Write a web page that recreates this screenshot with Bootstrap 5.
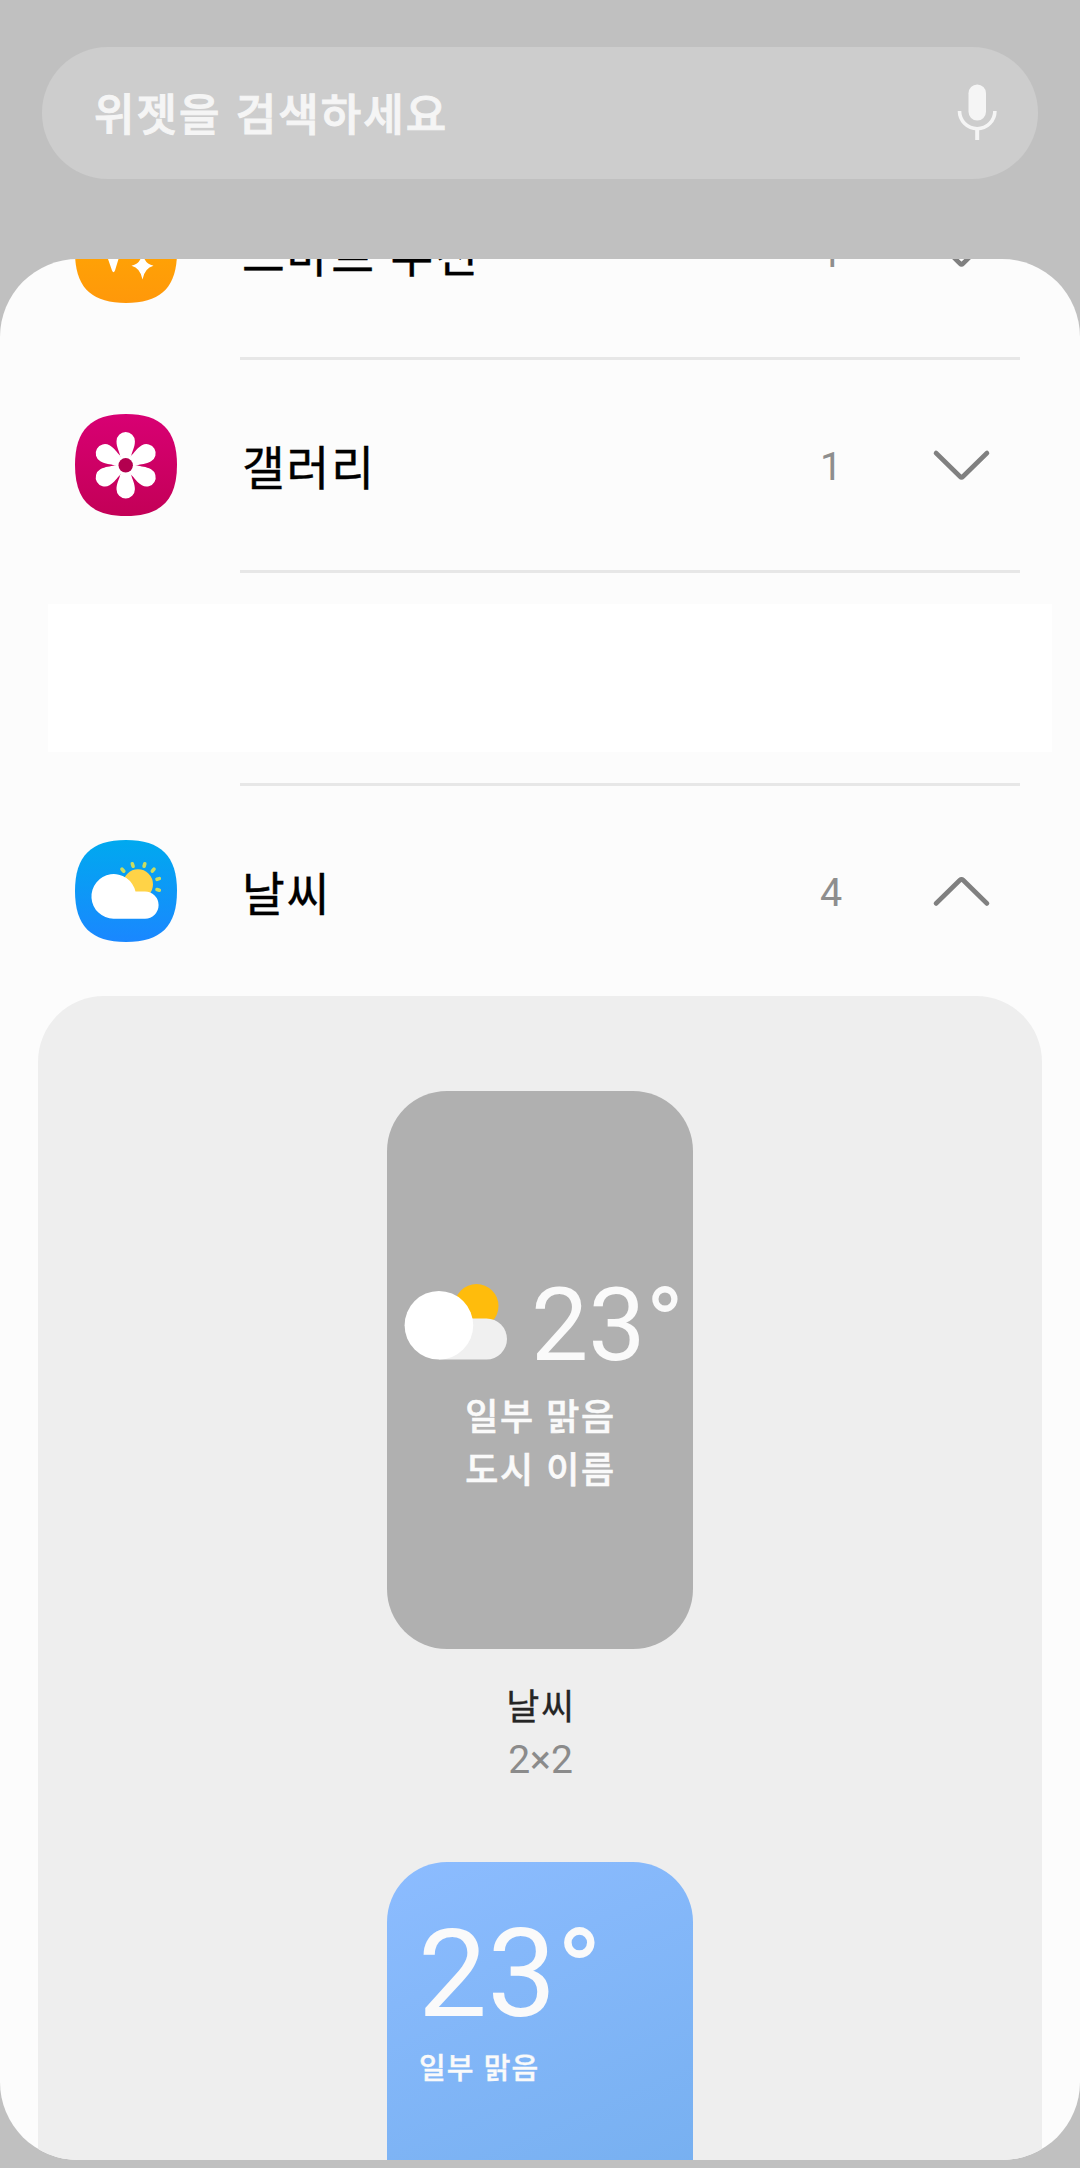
<!DOCTYPE html>
<html lang="ko">
<head>
<meta charset="utf-8">
<meta name="viewport" content="width=device-width, initial-scale=1">
<title>위젯</title>
<link href="https://cdn.jsdelivr.net/npm/bootstrap@5.3.0/dist/css/bootstrap.min.css" rel="stylesheet">
<style>
  body { height: 2168px; background: #c0c0c0; font-family: Roboto, "Noto Sans CJK KR", sans-serif; overflow: hidden; }
  .search-wrap { padding: 47px 42px 80px; }
  .search-pill { height: 132px; padding: 0 38px 0 52px; background: #cdcdcd; color: #f5f5f5; }
  .search-hint { font-family: "Noto Sans CJK KR", sans-serif; font-size: 44px; font-weight: 500; line-height: 66px; letter-spacing: 2px; margin-top: -3px; -webkit-text-stroke: 1px currentColor; }
  .sheet { height: 1901px; background: #fcfcfc; border-radius: 78px; }
  .app-list { margin-top: -112px; }
  .app-item { height: 213px; padding: 0 60px 0 75px; }
  .app-item .app-icon { width: 102px; height: 102px; margin-right: 63px; }
  .app-body { height: 213px; border-bottom: 3px solid #e7e7e7; }
  .app-item.open .app-body { border-bottom-color: transparent; }
  .app-icon { margin-bottom: 3px; }
  .app-name { font-family: "Noto Sans CJK KR", sans-serif; font-size: 46.5px; line-height: 70px; color: #000; padding-left: 2px; letter-spacing: 1.8px; -webkit-text-stroke: .4px currentColor; }
  .app-count { width: 24px; font-size: 39.5px; line-height: 46px; color: #8e8e8e; margin-right: 89px; padding-top: 4px; }
  .chev { width: 60px; height: 34px; margin-right: 28px; }
  .blank-row { margin: 31px 28px 31px 48px; height: 148px; background: #fff; }
  .blank-item { height: 213px; }
  .blank-line { height: 3px; margin: 0 60px 0 240px; background: #e7e7e7; }
  .panel { margin: -3px 38px 0; height: 1300px; padding-top: 95px; background: #eee; border-radius: 66px 66px 0 0; }
  .tile { width: 306px; height: 558px; border-radius: 60px; color: #fafafa; }
  .tile-gray { background: #b0b0b0; padding-top: 178px; }
  .tile-blue { background: linear-gradient(157deg, #8cbcff 0%, #6ba9e8 100%); padding: 44px 32px 0; }
  .weather-art { margin: 15px 24px 0 16px; }
  .temp-m { font-size: 102px; line-height: 112px; }
  .temp-l { font-size: 123px; line-height: 136px; margin-left: -1px; }
  .cond { font-family: "Noto Sans CJK KR", sans-serif; font-size: 36px; line-height: 53px; font-weight: 500; letter-spacing: 1.6px; margin-top: 7px; padding-left: 1px; -webkit-text-stroke: .6px currentColor; }
  .cond-s { font-family: "Noto Sans CJK KR", sans-serif; font-size: 29px; line-height: 44px; font-weight: 500; letter-spacing: 1.1px; margin-top: 2px; -webkit-text-stroke: .4px currentColor; }
  .tile-title { font-family: "Noto Sans CJK KR", sans-serif; font-size: 36px; line-height: 53px; letter-spacing: 1.6px; padding-left: 2px; color: #252525; margin-top: 29px; -webkit-text-stroke: .3px currentColor; }
  .tile-size { font-size: 39px; line-height: 53px; color: #8b8b8b; margin: 3px 0 75px; padding-left: 1px; }
</style>
<script src="https://cdn.jsdelivr.net/npm/bootstrap@5.3.0/dist/js/bootstrap.bundle.min.js"></script>
</head>
<body>
<svg width="0" height="0" class="position-absolute" aria-hidden="true">
  <defs>
    <path id="squircle" d="M51 0C86 0 102 16 102 51S86 102 51 102 0 86 0 51 16 0 51 0Z"/>
    <path id="petal" d="M-5.500-9.400C-6.500-14-9.200-18-9.200-24A9.200 9.200 0 0 1 9.200-24C9.200-18 6.500-14 5.500-9.400L0 0Z"/>
    <linearGradient id="orange" x2="0" y2="1"><stop offset="0" stop-color="#ffac00"/><stop offset="1" stop-color="#ff980a"/></linearGradient>
    <linearGradient id="pink" x2="0" y2="1"><stop offset="0" stop-color="#d80073"/><stop offset="1" stop-color="#c30057"/></linearGradient>
    <linearGradient id="sky" x2="0" y2="1"><stop offset="0" stop-color="#00a9ef"/><stop offset="1" stop-color="#1a87ff"/></linearGradient>
  </defs>
</svg>

<header class="search-wrap">
  <div class="search-pill rounded-pill d-flex align-items-center justify-content-between">
    <span class="search-hint">위젯을 검색하세요</span>
    <svg width="46" height="60" viewBox="0 0 46 60" fill="none" stroke="#f5f5f5">
      <rect x="14.500" y="1.500" width="17.500" height="36" rx="8.700" fill="#f5f5f5" stroke="none"/>
      <path d="M5.500 28A17.700 17.700 0 0 0 40.900 28" stroke-width="3.600"/>
      <path d="M23.200 45V57" stroke-width="4"/>
    </svg>
  </div>
</header>

<main class="sheet overflow-hidden">
  <div class="app-list d-flex flex-column">
    <div class="app-item d-flex align-items-center">
      <svg class="app-icon flex-shrink-0" viewBox="0 0 102 102">
        <use href="#squircle" fill="url(#orange)"/>
        <path fill="#fff" d="M38 16Q41 39 60 42Q46 46 43.500 58L40 69.500Q38.500 73 37 69.500L33 58Q31 46 17 42Q35 39 38 16ZM67.500 51Q69 63 78.500 64.700Q69.500 67 67.500 78.500Q65.500 67 56.500 64.700Q66 63 67.500 51Z"/>
      </svg>
      <div class="app-body flex-grow-1 d-flex align-items-center">
        <span class="app-name flex-grow-1">스마트 추천</span>
        <span class="app-count text-center">1</span>
        <svg class="chev" viewBox="0 0 60 34" fill="none" stroke="#808080" stroke-width="4.600" stroke-linecap="round" stroke-linejoin="round"><path d="M4 5L28 28.500Q29.500 30 31 28.500L55 5"/></svg>
      </div>
    </div>

    <div class="app-item d-flex align-items-center">
      <svg class="app-icon flex-shrink-0" viewBox="0 0 102 102">
        <use href="#squircle" fill="url(#pink)"/>
        <g fill="#fff" transform="translate(50.700 51.300)">
          <use href="#petal"/><use href="#petal" transform="rotate(60)"/><use href="#petal" transform="rotate(120)"/>
          <use href="#petal" transform="rotate(180)"/><use href="#petal" transform="rotate(240)"/><use href="#petal" transform="rotate(300)"/>
          <circle r="10"/><circle r="7.200" fill="#b3004f"/>
        </g>
      </svg>
      <div class="app-body flex-grow-1 d-flex align-items-center">
        <span class="app-name flex-grow-1">갤러리</span>
        <span class="app-count text-center">1</span>
        <svg class="chev" viewBox="0 0 60 34" fill="none" stroke="#808080" stroke-width="4.600" stroke-linecap="round" stroke-linejoin="round"><path d="M4 5L28 28.500Q29.500 30 31 28.500L55 5"/></svg>
      </div>
    </div>

    <div class="blank-item d-flex flex-column">
      <div class="blank-row"></div>
      <div class="blank-line"></div>
    </div>

    <div class="app-item open d-flex align-items-center">
      <svg class="app-icon flex-shrink-0" viewBox="0 0 102 102">
        <use href="#squircle" fill="url(#sky)"/>
        <circle cx="63" cy="44.300" r="15" fill="#ffd347"/>
        <g stroke="#c9dc62" stroke-width="3.600" stroke-linecap="round">
          <path d="M47 29.200L48.800 31.200M57.300 23.800L58.100 26.200M69.800 23.800L69.100 26.200M79 29.200L77.300 31.200M84.300 38.600L82 39.300M84.300 50.200L82 49.500"/>
        </g>
        <path fill="#fff" d="M38.500 78.700A22.300 22.300 0 1 1 60.500 51.500H70A13.600 13.600 0 0 1 70 78.700Z"/>
      </svg>
      <div class="app-body flex-grow-1 d-flex align-items-center">
        <span class="app-name flex-grow-1">날씨</span>
        <span class="app-count text-center">4</span>
        <svg class="chev" viewBox="0 0 60 34" fill="none" stroke="#808080" stroke-width="4.600" stroke-linecap="round" stroke-linejoin="round"><path d="M4 29.500L28 6Q29.500 4.500 31 6L55 29.500"/></svg>
      </div>
    </div>
  </div>

  <section class="panel d-flex flex-column align-items-center">
    <div class="tile tile-gray flex-shrink-0">
      <div class="d-flex">
        <svg width="104" height="80" viewBox="0 0 104 80" class="weather-art flex-shrink-0">
          <circle cx="73.500" cy="22" r="22" fill="#ffbc0c"/>
          <path d="M36 34.500H83.500A20.500 20.500 0 0 1 83.500 75.500H36Z" fill="#f0f0f0"/>
          <circle cx="35.900" cy="41.300" r="34.300" fill="#fff"/>
        </svg>
        <span class="temp-m">23°</span>
      </div>
      <div class="cond text-center">일부 맑음<br>도시 이름</div>
    </div>
    <div class="tile-title">날씨</div>
    <div class="tile-size">2×2</div>
    <div class="tile tile-blue flex-shrink-0">
      <div class="temp-l">23°</div>
      <div class="cond-s">일부 맑음</div>
    </div>
  </section>
</main>
</body>
</html>
